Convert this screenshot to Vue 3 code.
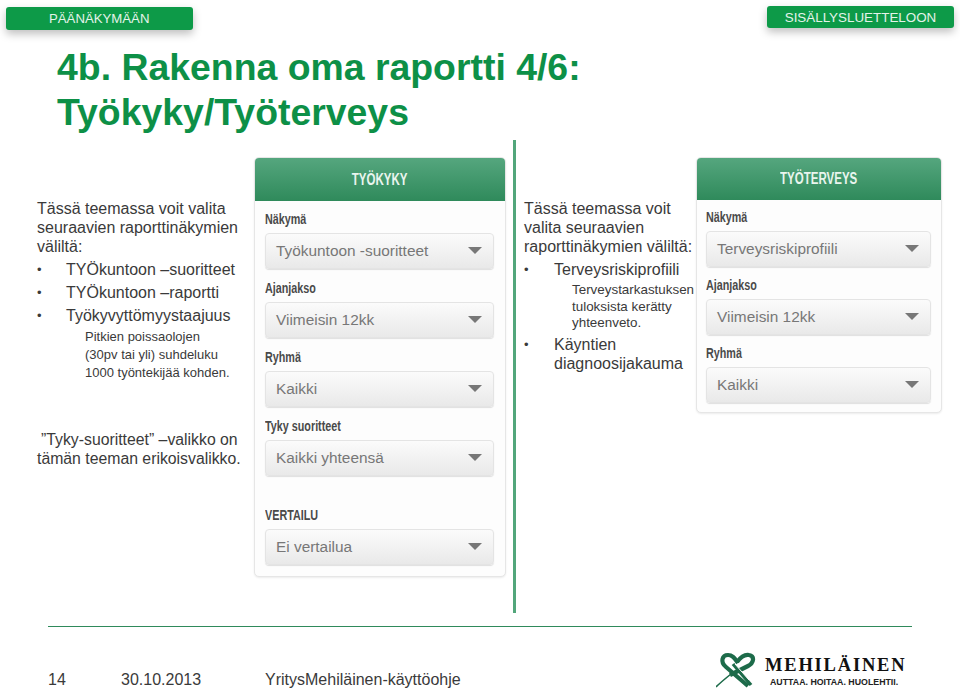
<template>
  <div class="slide">
    <div class="top-row">
      <a class="nav-btn left-btn">PÄÄNÄKYMÄÄN</a>
      <a class="nav-btn right-btn">SISÄLLYSLUETTELOON</a>
    </div>

    <h1 class="title">4b. Rakenna oma raportti 4/6:<br />Työkyky/Työterveys</h1>

    <div class="content">
      <div class="text-col first-col">
        <p>Tässä teemassa voit valita seuraavien raporttinäkymien väliltä:</p>
        <ul class="bullets">
          <li>TYÖkuntoon –suoritteet</li>
          <li>TYÖkuntoon –raportti</li>
          <li>Työkyvyttömyystaajuus
            <div class="sub">Pitkien poissaolojen<br />(30pv tai yli) suhdeluku<br />1000 työntekijää kohden.</div>
          </li>
        </ul>
        <p class="note">”Tyky-suoritteet” –valikko on<br />tämän teeman erikoisvalikko.</p>
      </div>

      <div class="panel panel-big">
        <div class="panel-head"><span>TYÖKYKY</span></div>
        <div class="panel-body">
          <div v-for="f in tyokyky" :key="f.label" class="field" :class="f.cls">
            <div class="field-label"><span>{{ f.label }}</span></div>
            <div class="select">
              <span>{{ f.value }}</span>
              <i class="caret"></i>
            </div>
          </div>
        </div>
      </div>

      <div class="divider"></div>

      <div class="text-col second-col">
        <p>Tässä teemassa voit valita seuraavien raporttinäkymien väliltä:</p>
        <ul class="bullets tight">
          <li>Terveysriskiprofiili
            <div class="sub small">Terveystarkastuksen tuloksista kerätty yhteenveto.</div>
          </li>
          <li>Käyntien diagnoosijakauma</li>
        </ul>
      </div>

      <div class="panel panel-small">
        <div class="panel-head"><span>TYÖTERVEYS</span></div>
        <div class="panel-body">
          <div v-for="f in tyoterveys" :key="f.label" class="field">
            <div class="field-label"><span>{{ f.label }}</span></div>
            <div class="select">
              <span>{{ f.value }}</span>
              <i class="caret"></i>
            </div>
          </div>
        </div>
      </div>
    </div>

    <div class="footer">
      <div class="footer-text">
        <span class="page-no">14</span>
        <span class="date">30.10.2013</span>
        <span class="doc">YritysMehiläinen-käyttöohje</span>
      </div>
      <div class="logo">
        <svg class="logo-mark" width="46" height="36" viewBox="0 0 46 36">
          <path d="M0 35 C5 30 10 26 15 22" fill="none" stroke="#1d6b4a" stroke-width="1.6" />
          <path d="M32 34 L10 15 C4 10 6 3 12 3 C17 3 19 7 22 11" fill="none" stroke="#1d6b4a" stroke-width="4.2" />
          <path d="M14 23 L32 14 C38 11 39 4 33 3 C28 2 24 6 21 10" fill="none" stroke="#1d6b4a" stroke-width="4.2" />
          <path d="M17 12 L35 33" fill="none" stroke="#1d6b4a" stroke-width="3.4" />
          <path d="M19 12 L33 28" fill="none" stroke="#fff" stroke-width="1" />
        </svg>
        <div class="logo-text">
          <div class="logo-name">MEHILÄINEN</div>
          <div class="logo-tag">AUTTAA. HOITAA. HUOLEHTII.</div>
        </div>
      </div>
    </div>
  </div>
</template>

<script setup>
const tyokyky = [
  { label: 'Näkymä', value: 'Työkuntoon -suoritteet' },
  { label: 'Ajanjakso', value: 'Viimeisin 12kk' },
  { label: 'Ryhmä', value: 'Kaikki' },
  { label: 'Tyky suoritteet', value: 'Kaikki yhteensä' },
  { label: 'VERTAILU', value: 'Ei vertailua', cls: 'vertailu' }
]

const tyoterveys = [
  { label: 'Näkymä', value: 'Terveysriskiprofiili' },
  { label: 'Ajanjakso', value: 'Viimeisin 12kk' },
  { label: 'Ryhmä', value: 'Kaikki' }
]
</script>

<style>
html, body {
  margin: 0;
  background: #fff;
}
</style>

<style scoped>
.slide {
  width: 960px;
  height: 689px;
  overflow: hidden;
  background: #fff;
  font-family: "Liberation Sans", Arial, sans-serif;
  color: #3a3a3a;
}

.top-row {
  display: flex;
  justify-content: space-between;
  align-items: flex-start;
  padding: 6px 6px 0;
  height: 25px;
}

.nav-btn {
  display: block;
  width: 187px;
  height: 23px;
  line-height: 23px;
  background: #0d9a48;
  border-radius: 3px;
  color: #e4f3ea;
  font-size: 13.2px;
  box-shadow: 0 4px 8px rgba(0, 0, 0, 0.25);
}

.left-btn {
  margin-top: 1px;
  padding-left: 43px;
  width: 144px;
}

.right-btn {
  text-align: center;
  height: 22px;
  line-height: 24px;
  font-size: 13.4px;
}

.title {
  margin: 14px 0 0 57px;
  font-size: 37.4px;
  line-height: 45px;
  font-weight: bold;
  color: #0d9047;
  height: 95px;
}

.content {
  display: flex;
  align-items: flex-start;
  height: 473px;
}

.text-col {
  font-size: 16px;
  line-height: 19px;
  padding-top: 59px;
}

.text-col p {
  margin: 0;
}

.first-col {
  width: 208px;
  margin-left: 37px;
  margin-right: 9px;
}

.second-col {
  width: 172px;
  margin-left: 8px;
}

.bullets {
  list-style: none;
  margin: 4px 0 0;
  padding: 0;
}

.bullets li {
  position: relative;
  padding-left: 29px;
  margin-bottom: 4px;
}

.bullets li::before {
  content: "•";
  position: absolute;
  left: 0;
  font-size: 13px;
}

.sub {
  font-size: 13px;
  line-height: 18px;
  margin-left: 19px;
  margin-top: 3px;
}

.text-col .note {
  margin-top: 48px;
  font-size: 15.8px;
  text-indent: 4px;
  white-space: nowrap;
}

.bullets.tight {
  margin-top: 4px;
}

.tight li {
  padding-left: 30px;
  margin-bottom: 3px;
}

.sub.small {
  font-size: 13.4px;
  line-height: 16.5px;
  margin-left: 18px;
  margin-top: 3px;
  width: 125px;
}

.panel {
  margin-top: 17px;
  background: #fdfdfd;
  border: 1px solid #e6e6e6;
  border-radius: 5px;
  box-shadow: 0 1px 2px rgba(0, 0, 0, 0.08);
  box-sizing: border-box;
  overflow: hidden;
  flex: none;
}

.panel-big {
  width: 252px;
  height: 420px;
}

.panel-small {
  width: 246px;
  height: 256px;
}

.panel-head {
  height: 42px;
  line-height: 42px;
  text-align: center;
  background: linear-gradient(#55a67e, #2f8a5b);
  color: #e9f5ee;
  font-size: 16px;
  font-weight: bold;
}

.panel-big .panel-head {
  height: 43px;
  line-height: 43px;
}

.panel-head span {
  display: inline-block;
  transform: scaleX(0.72);
}

.panel-body {
  padding: 9px 11px 0 10px;
}

.panel-small .panel-body {
  padding: 8px 10px 0 9px;
}

.field {
  margin-bottom: 10.5px;
}

.panel-small .field {
  margin-bottom: 9.5px;
}

.field-label {
  font-size: 14px;
  font-weight: bold;
  line-height: 17px;
  color: #4a4a4a;
  height: 22px;
  padding-top: 1px;
}

.field-label span {
  display: inline-block;
  transform: scaleX(0.77);
  transform-origin: left;
}

.select {
  display: flex;
  align-items: center;
  justify-content: space-between;
  height: 35.5px;
  padding: 0 11px 0 10px;
  border: 1px solid #e4e4e4;
  border-radius: 4px;
  background: linear-gradient(#fbfbfb, #e9e9e9);
  box-shadow: 0 1px 1px rgba(0, 0, 0, 0.12);
  box-sizing: border-box;
  font-size: 15.4px;
  color: #777;
}

.caret {
  width: 0;
  height: 0;
  border-left: 7px solid transparent;
  border-right: 7px solid transparent;
  border-top: 7px solid #777;
}

.vertailu {
  margin-top: 30.5px;
}

.divider {
  width: 3px;
  height: 473px;
  margin-left: 7px;
  flex: none;
  background: #52a67b;
}

.footer {
  margin: 13px 48px 0;
  border-top: 1px solid #2f8a5b;
  width: 864px;
  height: 62px;
  display: flex;
  justify-content: space-between;
  align-items: flex-end;
}

.footer-text {
  display: flex;
  font-size: 16px;
  line-height: 18px;
}

.page-no {
  width: 73px;
}

.date {
  width: 144px;
}

.logo {
  display: flex;
  align-items: flex-end;
  margin-right: 8px;
  gap: 3px;
  padding-bottom: 1px;
}

.logo-text {
  padding-bottom: 1px;
  width: 139px;
}

.logo-name {
  font-family: "Liberation Serif", serif;
  font-weight: bold;
  font-size: 18.5px;
  line-height: 20px;
  letter-spacing: 1.8px;
  color: #111;
}

.logo-tag {
  font-size: 8.8px;
  font-weight: bold;
  line-height: 10px;
  margin-top: 2px;
  color: #222;
  padding-left: 5px;
  white-space: nowrap;
}
</style>
